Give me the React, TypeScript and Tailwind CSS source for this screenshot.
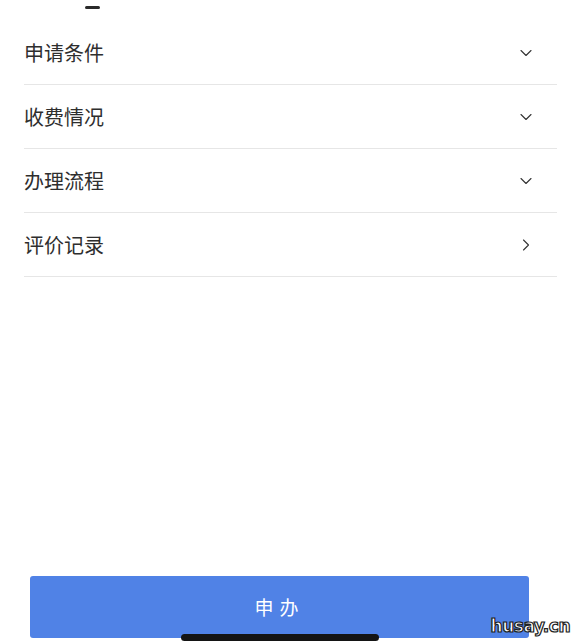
import { ChevronDown, ChevronRight } from "lucide-react";

const rows = [
  { label: "申请条件", open: true },
  { label: "收费情况", open: true },
  { label: "办理流程", open: true },
  { label: "评价记录", open: false },
];

export default function App() {
  return (
    <div
      className="relative flex h-[642px] w-[584px] flex-col overflow-hidden bg-white"
      style={{ fontFamily: '"Noto Sans CJK SC", "Noto Sans", sans-serif' }}
    >
      {/* top handle */}
      <div className="ml-[85px] mt-[6px] h-[3px] w-[15px] rounded-full bg-[#2a2a2a]" />

      <div className="mt-[12px] pl-6 pr-[27px]">
        {rows.map((r) => (
          <div
            key={r.label}
            className="flex h-[64px] items-center justify-between border-b border-[#e6e6e6]"
          >
            <span className="text-[20px] leading-none text-[#2e2e2e]">{r.label}</span>
            {r.open ? (
              <ChevronDown className="mr-[21px] h-[20px] w-[20px] text-[#333]" strokeWidth={1.3} />
            ) : (
              <ChevronRight className="mr-[21px] h-[20px] w-[20px] text-[#333]" strokeWidth={1.3} />
            )}
          </div>
        ))}
      </div>

      <div className="flex-1" />

      <div className="pb-[4px] pl-[30px] pr-[55px]">
        <button className="flex h-[62px] w-full items-center justify-center rounded-[3px] bg-[#5082e6] text-[19px] tracking-[6px] text-white">
          申办
        </button>
      </div>

      {/* home indicator */}
      <div className="absolute bottom-[1px] left-[181px] h-[7px] w-[198px] rounded-full bg-[#141414]" />

      {/* watermark */}
      <div
        className="absolute bottom-[7px] right-[14px] text-[17px] font-bold leading-none text-white"
        style={{
          fontFamily: '"DejaVu Sans", sans-serif',
          WebkitTextStroke: "1.2px #222",
          letterSpacing: "-0.5px",
        }}
      >
        husay.cn
      </div>
    </div>
  );
}
